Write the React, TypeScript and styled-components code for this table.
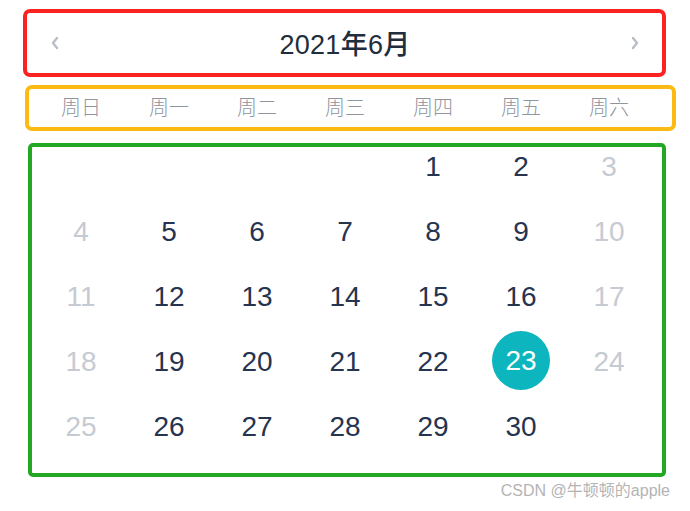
import React from "react";
import styled, { createGlobalStyle } from "styled-components";

const Global = createGlobalStyle`
  html, body { margin: 0; padding: 0; background: #ffffff; }
  body { font-family: "Liberation Sans", "Noto Sans CJK SC", sans-serif; }
`;

const Page = styled.div`
  width: 690px;
  height: 511px;
  padding-top: 9px;
  box-sizing: border-box;
  display: flex;
  flex-direction: column;
`;

const Header = styled.div`
  margin-left: 23px;
  width: 643px;
  height: 68px;
  box-sizing: border-box;
  border: 4px solid #fb2222;
  border-radius: 7px;
  display: flex;
  align-items: center;
  justify-content: space-between;
  padding: 0 20px 0 21px;
`;

const Title = styled.div`
  font-family: "Liberation Sans", "Noto Sans CJK SC", sans-serif;
  font-size: 27px;
  font-weight: 500;
  color: #1f2d3d;
  letter-spacing: 0.3px;
  margin-top: -2px;
`;

const Arrow = styled.span`
  display: flex;
  width: 14px;
  justify-content: center;
`;

const Weekdays = styled.div`
  margin-top: 8px;
  margin-left: 25px;
  width: 651px;
  height: 46px;
  box-sizing: border-box;
  border: 4px solid #fdba12;
  border-radius: 7px;
  padding: 0 0 4px 8px;
  display: grid;
  grid-template-columns: repeat(7, 88px);
  align-items: center;
`;

const WeekLabel = styled.div`
  text-align: center;
  font-family: "Noto Sans CJK SC", sans-serif;
  font-size: 20px;
  font-weight: 300;
  color: #8f959f;
`;

const Days = styled.div`
  margin-top: 12px;
  margin-left: 28px;
  width: 638px;
  height: 334px;
  box-sizing: border-box;
  border: 4px solid #22a822;
  border-radius: 5px;
  padding: 0 0 0 5px;
  display: grid;
  grid-template-columns: repeat(7, 88px);
  grid-auto-rows: 40px;
  row-gap: 25px;
  align-content: start;
`;

const Cell = styled.div`
  display: flex;
  align-items: center;
  justify-content: center;
  position: relative;
`;

const DayNum = styled.div<{ $muted?: boolean; $active?: boolean }>`
  width: 58px;
  height: 58px;
  border-radius: 50%;
  display: flex;
  align-items: center;
  justify-content: center;
  flex-shrink: 0;
  font-family: "Liberation Sans", sans-serif;
  font-size: 28px;
  color: ${(p) => (p.$active ? "#ffffff" : p.$muted ? "#c6cad2" : "#263450")};
  background: ${(p) => (p.$active ? "#0db6be" : "transparent")};
  margin-top: ${(p) => (p.$active ? "-3px" : "0")};
  padding-top: ${(p) => (p.$active ? "1px" : "0")};
`;

const Watermark = styled.div`
  align-self: flex-end;
  margin-right: 20px;
  margin-top: 0px;
  font-family: "Liberation Sans", "Noto Sans CJK SC", sans-serif;
  font-size: 16px;
  color: #b4b4b4;
`;

const Chevron = ({ dir }: { dir: "left" | "right" }) => (
  <svg width="10" height="14" viewBox="0 0 10 14">
    <path
      d={dir === "left" ? "M7 2 L3 7 L7 12" : "M3 2 L7 7 L3 12"}
      fill="none"
      stroke="#b9bdc6"
      strokeWidth="2.4"
      strokeLinecap="round"
      strokeLinejoin="round"
    />
  </svg>
);

type Day = { n: number | null; muted?: boolean; active?: boolean };

const days: Day[] = [
  { n: null }, { n: null }, { n: null }, { n: null }, { n: 1 }, { n: 2 }, { n: 3, muted: true },
  { n: 4, muted: true }, { n: 5 }, { n: 6 }, { n: 7 }, { n: 8 }, { n: 9 }, { n: 10, muted: true },
  { n: 11, muted: true }, { n: 12 }, { n: 13 }, { n: 14 }, { n: 15 }, { n: 16 }, { n: 17, muted: true },
  { n: 18, muted: true }, { n: 19 }, { n: 20 }, { n: 21 }, { n: 22 }, { n: 23, active: true }, { n: 24, muted: true },
  { n: 25, muted: true }, { n: 26 }, { n: 27 }, { n: 28 }, { n: 29 }, { n: 30 }, { n: null },
];

const weekLabels = ["周日", "周一", "周二", "周三", "周四", "周五", "周六"];

export default function App() {
  return (
    <>
      <Global />
      <Page>
        <Header>
          <Arrow><Chevron dir="left" /></Arrow>
          <Title>2021年6月</Title>
          <Arrow><Chevron dir="right" /></Arrow>
        </Header>
        <Weekdays>
          {weekLabels.map((w) => (
            <WeekLabel key={w}>{w}</WeekLabel>
          ))}
        </Weekdays>
        <Days>
          {days.map((d, i) => (
            <Cell key={i}>
              {d.n !== null && (
                <DayNum $muted={d.muted} $active={d.active}>
                  {d.n}
                </DayNum>
              )}
            </Cell>
          ))}
        </Days>
        <Watermark>CSDN @牛顿顿的apple</Watermark>
      </Page>
    </>
  );
}
